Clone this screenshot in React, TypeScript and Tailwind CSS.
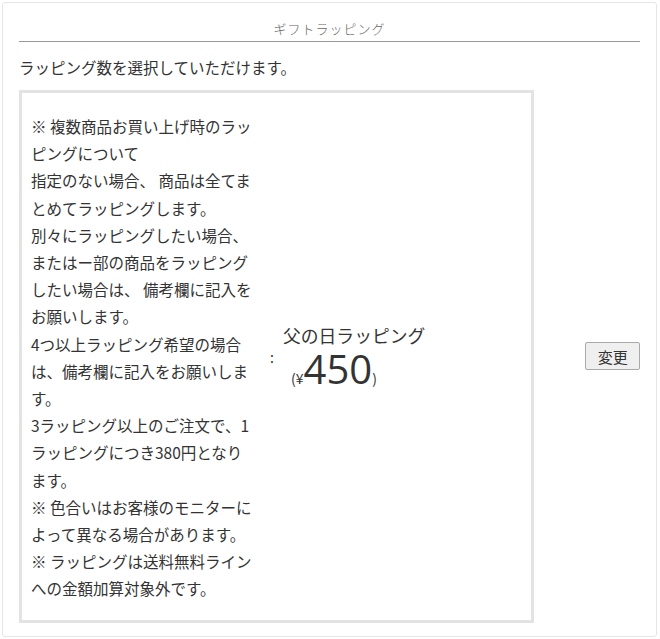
import React from "react";

const notes = [
  "※ 複数商品お買い上げ時のラッピングについて",
  "指定のない場合、 商品は全てまとめてラッピングします。",
  "別々にラッピングしたい場合、 またはー部の商品をラッピングしたい場合は、 備考欄に記入をお願いします。",
  "4つ以上ラッピング希望の場合は、備考欄に記入をお願いします。",
  "3ラッピング以上のご注文で、1ラッピングにつき380円となります。",
  "※ 色合いはお客様のモニターによって異なる場合があります。",
  "※ ラッピングは送料無料ラインへの金額加算対象外です。",
];

const App = () => {
  return (
    <div
      className="w-[660px] h-[639px] bg-white pt-[2px] pl-[2px] text-[#333]"
      style={{ fontFamily: '"Noto Sans CJK JP", "Noto Sans", sans-serif' }}
    >
      <div className="w-[655px] h-[635px] border border-[#e6e6e6] rounded-[3px] px-[16px]">
        {/* 見出し */}
        <div className="h-[39px] flex items-end justify-center pb-[6px] border-b border-[#999]">
          <span className="text-[13px] tracking-[1px] text-[#666] leading-none font-light">ギフトラッピング</span>
        </div>

        <p className="mt-[14px] text-[15.5px] leading-[22px]">ラッピング数を選択していただけます。</p>

        <div className="mt-[12px] flex items-center">
          <div className="w-[519px] border-[3px] border-[#e3e3e3] flex items-center">
            <div className="w-[248px] pl-[9px] pt-[20px] pb-[17px] text-[15.5px] leading-[27.2px]">
              {notes.map((n) => (
                <p key={n} className="w-[224px]">
                  {n}
                </p>
              ))}
            </div>
            <span className="text-[14px] mt-[2px] w-[12px]">:</span>
            <div className="ml-[1px] flex flex-col items-start">
              <span className="text-[17.8px] leading-[22px]">父の日ラッピング</span>
              <span className="ml-[8px] mt-[4px] flex items-baseline leading-none">
                <span className="text-[14px]">(¥</span>
                <span
                  className="text-[40px] leading-[38px]"
                  style={{ fontFamily: '"Open Sans", "Noto Sans", sans-serif' }}
                >
                  450
                </span>
                <span className="text-[14px]">)</span>
              </span>
            </div>
          </div>

          <button className="ml-[51px] w-[55px] h-[28px] bg-[#efefef] border border-[#aaa] rounded-[2px] text-[15px] leading-none">
            変更
          </button>
        </div>
      </div>
    </div>
  );
};

export default App;
